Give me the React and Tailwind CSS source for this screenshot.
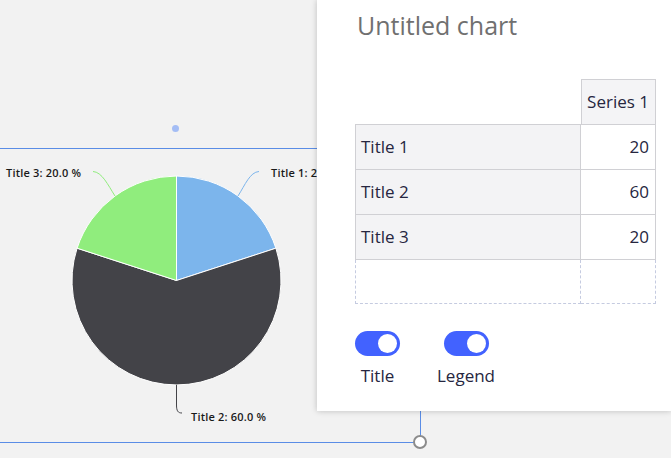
import React from "react";

const rows = [
    { title: "Title 1", value: 20 },
    { title: "Title 2", value: 60 },
    { title: "Title 3", value: 20 },
];

function PieChart() {
    return (
        <svg width="317" height="458" className="absolute left-0 top-0 overflow-visible">
            <path d="M176.5 280.5 L176.5 176 A104.5 104.5 0 0 1 275.9 248.2 Z" fill="#7cb5ec" stroke="#ffffff" strokeWidth="1" />
            <path d="M176.5 280.5 L275.9 248.2 A104.5 104.5 0 1 1 77.1 248.2 Z" fill="#434348" stroke="#ffffff" strokeWidth="1" />
            <path d="M176.5 280.5 L77.1 248.2 A104.5 104.5 0 0 1 176.5 176 Z" fill="#90ed7d" stroke="#ffffff" strokeWidth="1" />

            <path d="M238 196 C245 185 250 172 259 171.5" fill="none" stroke="#7cb5ec" strokeWidth="1" />
            <path d="M115 196 C108 185 102 172 93 171.5" fill="none" stroke="#90ed7d" strokeWidth="1" />
            <path d="M176.5 385 L176.5 405 C176.5 411 178 413 182 413" fill="none" stroke="#434348" strokeWidth="1" />

            <g fontFamily="'Open Sans', 'DejaVu Sans', sans-serif" fontSize="11" fontWeight="600" letterSpacing="0.2" fill="#1a1a1a">
                <text x="271" y="177">Title 1: 20.0 %</text>
                <text x="6" y="177">Title 3: 20.0 %</text>
                <text x="191" y="421">Title 2: 60.0 %</text>
            </g>
        </svg>
    );
}

function Toggle({ label }) {
    return (
        <div className="flex flex-col items-center gap-[9px]">
            <div className="w-[45px] h-[25px] rounded-full bg-[#4262ff] flex items-center justify-end pr-[3px]">
                <div className="w-[19px] h-[19px] rounded-full bg-white"></div>
            </div>
            <span className="text-[17px] leading-[22px] text-[#262640]">{label}</span>
        </div>
    );
}

export default function App() {
    return (
        <div
            className="w-[671px] h-[458px] bg-[#f2f2f2] flex items-start overflow-hidden"
            style={{ fontFamily: "'Open Sans', 'Liberation Sans', sans-serif" }}
        >
            <div className="relative w-[317px] h-[458px] shrink-0">
                <div className="absolute left-[-4px] top-[148px] w-[425px] h-[295px] border-[1.5px] border-[#5a8de6]"></div>
                <div className="absolute left-[172px] top-[125px] w-[7px] h-[7px] rounded-full bg-[#a4bdf5]"></div>
                <PieChart />
                <div className="absolute left-[413px] top-[435px] w-[14px] h-[14px] rounded-full bg-white border-[2.5px] border-[#8c8c8c] z-20"></div>
            </div>

            <div className="relative z-10 w-[354px] h-[411px] bg-white shadow-[0_0_6px_rgba(0,0,0,0.22)] pl-[38px] pr-[15px]">
                <h1 className="pt-[9px] pl-[2px] text-[25px] leading-[32px] text-[#707070]">Untitled chart</h1>

                <div className="mt-[38px] flex flex-col">
                    <div className="flex h-[45px]">
                        <div className="w-[226px]"></div>
                        <div className="w-[75px] bg-[#f4f4f6] border border-b-0 border-[#d0d0d4] flex items-center justify-end pr-[6px] text-[17px] text-[#262640]">
                            Series 1
                        </div>
                    </div>
                    {rows.map((row) => (
                        <div key={row.title} className="flex h-[45px] border-t border-[#d0d0d4]">
                            <div className="w-[226px] bg-[#f3f3f5] border-l border-r border-[#d0d0d4] flex items-center pl-[5px] text-[17px] text-[#262640]">
                                {row.title}
                            </div>
                            <div className="w-[75px] bg-white border-r border-[#d0d0d4] flex items-center justify-end pr-[6px] text-[17px] text-[#262640]">
                                {row.value}
                            </div>
                        </div>
                    ))}
                    <div className="flex h-[45px] border-t border-[#d0d0d4]">
                        <div className="w-[226px] border-l border-r border-b border-dashed border-[#c5cbe0]"></div>
                        <div className="w-[75px] border-r border-b border-dashed border-[#c5cbe0]"></div>
                    </div>
                </div>

                <div className="mt-[27px] flex items-start gap-[37px]">
                    <Toggle label="Title" />
                    <Toggle label="Legend" />
                </div>
            </div>
        </div>
    );
}
